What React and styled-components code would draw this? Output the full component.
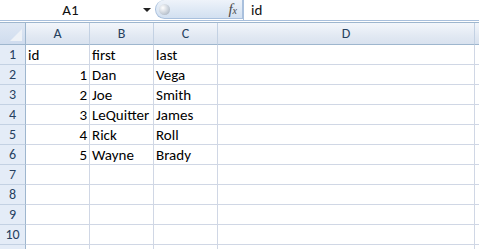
import React from 'react'
import styled, { createGlobalStyle } from 'styled-components'

const GlobalStyle = createGlobalStyle`
  html, body {
    margin: 0;
    padding: 0;
    background: #ffffff;
    overflow: hidden;
  }
  body {
    font-family: Calibri, Carlito, "Liberation Sans", sans-serif;
  }
`

const cols = ['A', 'B', 'C', 'D', '']
const rows = [
  ['id', 'first', 'last'],
  [1, 'Dan', 'Vega'],
  [2, 'Joe', 'Smith'],
  [3, 'LeQuitter', 'James'],
  [4, 'Rick', 'Roll'],
  [5, 'Wayne', 'Brady'],
  [], [], [], [], []
]

function App() {
  return (
    <Window>
      <GlobalStyle />
      <FormulaBar>
        <NameBox>
          <span>A1</span>
          <DropArrow />
        </NameBox>
        <FxPill>
          <Knob />
          <FxLabel>f<sub>x</sub></FxLabel>
        </FxPill>
        <FormulaInput>id</FormulaInput>
      </FormulaBar>
      <Spacer />
      <Sheet>
        <Corner><CornerTriangle /></Corner>
        {cols.map((c, i) => (
          <ColHeader key={i} last={i === cols.length - 1}>{c}</ColHeader>
        ))}
        {rows.map((r, ri) => (
          <React.Fragment key={ri}>
            {/* last row is cut by the window edge, label not visible */}
            <RowHeader>{ri < 10 ? ri + 1 : ''}</RowHeader>
            {cols.map((c, ci) => {
              const v = r[ci]
              return (
                <Cell key={ci} numeric={typeof v === 'number'} last={ci === cols.length - 1}>
                  {v}
                </Cell>
              )
            })}
          </React.Fragment>
        ))}
      </Sheet>
    </Window>
  )
}

export default App

const Window = styled.div`
width: 479px;
height: 249px;
overflow: hidden;
background: #ffffff;
`

const FormulaBar = styled.div`
display: flex;
height: 20px;
border-bottom: 1px solid #a8bfdc;
background: #ffffff;
`

const NameBox = styled.div`
width: 155px;
position: relative;
display: flex;
align-items: center;
justify-content: center;
font-size: 15px;
color: #111;
padding-right: 14px;
box-sizing: border-box;
`

const DropArrow = styled.div`
position: absolute;
right: 4px;
top: 8px;
width: 0;
height: 0;
border-left: 4px solid transparent;
border-right: 4px solid transparent;
border-top: 4px solid #222;
`

const FxPill = styled.div`
width: 88px;
height: 19px;
box-sizing: border-box;
display: flex;
align-items: center;
justify-content: space-between;
padding: 0 5px 0 3px;
border: 1px solid #a9c0dd;
border-top: none;
border-radius: 10px 0 0 10px;
background: linear-gradient(#eef3fa, #d2e0f1);
`

const Knob = styled.div`
width: 11px;
height: 11px;
border-radius: 50%;
background: radial-gradient(circle at 35% 35%, #ffffff, #c4ccd6 60%, #9aa6b4);
`

const FxLabel = styled.div`
font-family: "Liberation Serif", serif;
font-style: italic;
font-size: 15px;
color: #4a4a4a;
line-height: 1;
sub {
  font-size: 10px;
  vertical-align: baseline;
}
`

const FormulaInput = styled.div`
flex: 1;
display: flex;
align-items: center;
padding-left: 7px;
font-size: 15px;
color: #111;
border-left: 1px solid #a9c0dd;
`

const Spacer = styled.div`
height: 1px;
background: #ffffff;
border-bottom: 1px solid #9eb6ce;
`

const Sheet = styled.div`
display: grid;
grid-template-columns: 26px 64px 64px 64px 257px 1fr;
grid-template-rows: 22px repeat(11, 20px);
`

const Corner = styled.div`
position: relative;
background: linear-gradient(#dfe8f4, #cfdcee);
border-right: 1px solid #9eb6ce;
border-bottom: 1px solid #9eb6ce;
box-sizing: border-box;
`

const CornerTriangle = styled.div`
position: absolute;
right: 3px;
bottom: 3px;
width: 0;
height: 0;
border-left: 12px solid transparent;
border-bottom: 12px solid #eef2f7;
`

const ColHeader = styled.div`
display: flex;
align-items: center;
justify-content: center;
font-size: 14px;
color: #27415f;
background: linear-gradient(#f3f6fb, #e2e9f3 60%, #d9e2ef);
border-right: ${p => (p.last ? 'none' : '1px solid #c3d1e3')};
border-bottom: 1px solid #9eb6ce;
box-sizing: border-box;
`

const RowHeader = styled.div`
display: flex;
align-items: center;
justify-content: center;
font-size: 14px;
color: #27415f;
background: #e4ecf7;
border-right: 1px solid #9eb6ce;
border-bottom: 1px solid #c3d1e3;
box-sizing: border-box;
`

const Cell = styled.div`
display: flex;
align-items: center;
justify-content: ${p => (p.numeric ? 'flex-end' : 'flex-start')};
padding: 0 2px 0 2px;
font-size: 15px;
color: #000;
white-space: nowrap;
border-right: ${p => (p.last ? 'none' : '1px solid #d0d7e5')};
border-bottom: 1px solid #d0d7e5;
box-sizing: border-box;
`
